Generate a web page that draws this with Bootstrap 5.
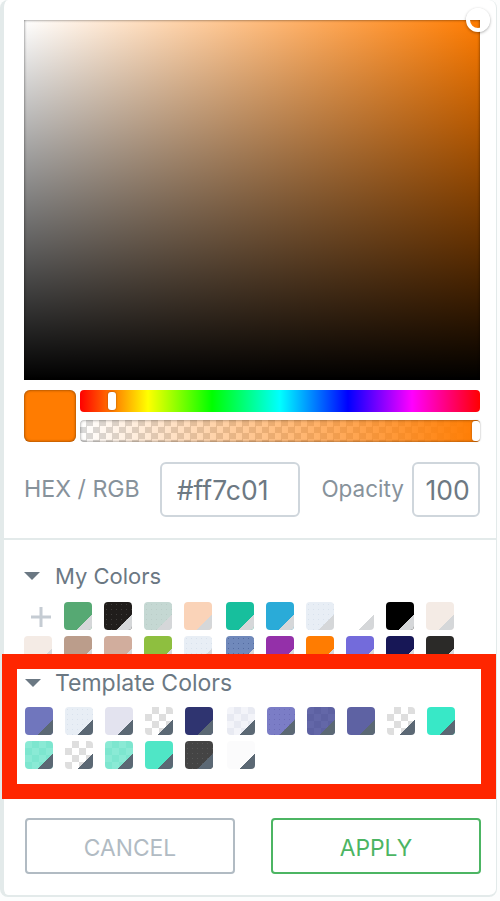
<!DOCTYPE html>
<html lang="en">
<head>
<meta charset="utf-8">
<title>Color picker</title>
<link rel="stylesheet" href="https://cdn.jsdelivr.net/npm/bootstrap@5.3.0/dist/css/bootstrap.min.css">
<style>
html,body{margin:0;background:#fcfdfd;height:100%}
body{font-family:Inter,"Noto Sans",sans-serif}
.cp-panel{width:497px;height:897px;background:#fff;border:solid #e3eaea;border-width:0 1px 2px 4px;border-radius:8px;padding-top:20px}
.cp-inner{padding:0 16px 0 20px}
.cp-field{height:360px;position:relative;background:linear-gradient(to top,#000,transparent),linear-gradient(to right,#fff,#ff7c01);box-shadow:inset 0 0 3px rgba(0,0,0,.6)}
.cp-handle{position:absolute;top:-12px;right:-10px;width:24px;height:24px;border:4px solid #fff;border-radius:50%;box-shadow:0 1px 3px rgba(0,0,0,.35)}
.cp-preview{width:52px;height:52px;flex:none;border-radius:6px;background:#ff7c01;box-shadow:inset 0 0 3px rgba(0,0,0,.55)}
.cp-sliders{margin-top:10px;gap:4px}
.cp-bars{gap:8px;flex:1}
.cp-bar{height:22px;border-radius:4px;position:relative}
.cp-hue{background:linear-gradient(to right,#f00,#ff0 17%,#0f0 33%,#0ff 50%,#00f 67%,#f0f 83%,#f00)}
.cp-alpha{background:linear-gradient(to right,rgba(255,124,1,0),#ff7c01),repeating-conic-gradient(#d9d9d9 0 25%,#fff 0 50%) 0 0/13px 13px;box-shadow:inset 0 0 3px rgba(0,0,0,.5)}
.cp-thumb{position:absolute;width:8px;background:#fff;border-radius:3px;box-shadow:0 0 2px rgba(0,0,0,.4)}
.cp-hue .cp-thumb{left:28px;top:2px;height:18px}
.cp-alpha .cp-thumb{right:0;top:1px;height:20px}
.cp-inputs{margin-top:20px;height:55px}
.cp-label{font-size:22.5px;color:#87929b;line-height:1}
.cp-hexlabel{font-size:23.2px}
.cp-text.form-control{height:55px;border:2px solid #cfd6dc;border-radius:6px;background:#fff;color:#6d7983;font-size:26.5px;padding:0;box-shadow:none}
.cp-hex.form-control{width:140px;margin-left:20px;text-align:left;padding-left:15px}
.cp-op.form-control{width:68px;margin-left:8px;text-align:center;padding-left:3px}
.cp-oplabel{margin-left:auto}
.cp-section{height:116px;margin-top:21px;border-top:2px solid #e3eaea;padding:23px 16px 0 20px}
.cp-head{height:26px;font-size:22px;line-height:26px;color:#6b7883}
.cp-tpl .cp-head{font-size:23px}
.cp-caret{width:16px;height:8px;flex:none;margin-right:15px;background:#6b7883;clip-path:polygon(0 0,100% 0,50% 100%)}
.cp-tpl .cp-caret{margin-right:14px}
.cp-grid{display:grid;grid-template-columns:repeat(4,40px) 42px repeat(6,40px);row-gap:6px;margin-top:13px}
.cp-plus{width:20px;height:20px;margin:5px 0 0 7px;display:block}
.cp-sw{display:block;width:28px;height:28px;border-radius:4px;position:relative;overflow:hidden}
.cp-sw::after{content:"";position:absolute;inset:0;background:linear-gradient(135deg,transparent 73%,#d5d7d9 73%)}
.cp-tpl .cp-sw::after{background:linear-gradient(135deg,transparent 73%,#5b6874 73%)}
.cp-redbox{width:494px;margin-left:-2px;height:145px;border:15px solid #ff2600;padding:1px 0 0 8px;background:#fff}
.cp-redbox .cp-grid{margin-top:11px}
.cp-actions{margin-top:19px;padding:0 15px 0 21px;gap:36px}
.cp-btn.btn{flex:1;height:56px;border-width:2px;border-radius:4px;font-size:22.8px;line-height:1;background:#fff;padding:5px 0 0}
.cp-cancel.btn{border-color:#b1bbc3;color:#b1bbc3}
.cp-apply.btn{border-color:#4cb563;color:#4cb563}
.dots{background-image:radial-gradient(var(--dot) .6px,transparent .9px);background-size:5px 5px}
.chk{background-image:repeating-conic-gradient(var(--chk) 0 25%,transparent 0 50%);background-size:14px 14px}
.k1{background-color:#56a973}.k2{background-color:#201d1b;--dot:rgba(255,255,255,.14)}.k3{background-color:#c5d8d3;--dot:rgba(0,0,0,.05)}.k4{background-color:#fad3b8}.k5{background-color:#17bf9d}.k6{background-color:#2aabd8}.k7{background-color:#e8eef5;--dot:rgba(90,120,170,.1)}.k8{background-color:#fff}.k9{background-color:#000}.k10{background-color:#f4ebe5}
.k11{background-color:#bb9d8b}.k12{background-color:#d1ad9d}.k13{background-color:#8ebf3f}.k14{background-color:#7089bb;--dot:rgba(20,40,100,.3)}.k15{background-color:#9430a9}.k16{background-color:#ff7c01}.k17{background-color:#736bdb}.k18{background-color:#171756}.k19{background-color:#2b2a28}
.t1{background-color:#7076bd}.t2{background-color:#e3e3ef}.t3{background-color:#fff;--chk:#dedede}.t4{background-color:#2f3470}.t5{background-color:#f3f4f9;--chk:#e8eaf2}.t6{background-color:#7b7dc6;--dot:rgba(40,40,120,.18)}.t7{background-color:#6367a8;--chk:#5d61a2}.t8{background-color:#5e62a3}.t9{background-color:#38e8c7}.t10{background-color:#8aead5;--chk:#7de6cf}.t11{background-color:#4fe6c6}.t12{background-color:#444;--dot:rgba(255,255,255,.1)}.t13{background-color:#fbfbfc}
</style>
</head>
<body>
<div class="cp-panel">
  <div class="cp-inner">
    <div class="cp-field"><span class="cp-handle"></span></div>
    <div class="d-flex cp-sliders">
      <div class="cp-preview"></div>
      <div class="d-flex flex-column cp-bars">
        <div class="cp-bar cp-hue"><span class="cp-thumb"></span></div>
        <div class="cp-bar cp-alpha"><span class="cp-thumb"></span></div>
      </div>
    </div>
    <div class="d-flex align-items-center cp-inputs">
      <span class="cp-label cp-hexlabel">HEX / RGB</span>
      <input class="form-control cp-text cp-hex" type="text" value="#ff7c01" aria-label="Hex">
      <span class="cp-label cp-oplabel">Opacity</span>
      <input class="form-control cp-text cp-op" type="text" value="100" aria-label="Opacity">
    </div>
  </div>

  <div class="cp-section overflow-hidden">
    <div class="d-flex align-items-center cp-head"><span class="cp-caret"></span>My Colors</div>
    <div class="cp-grid">
      <svg class="cp-plus" viewBox="0 0 20 20"><path d="M10 0v20M0 10h20" stroke="#c5ccd3" stroke-width="3" fill="none"/></svg>
      <span class="cp-sw k1"></span><span class="cp-sw k2 dots"></span><span class="cp-sw k3 dots"></span><span class="cp-sw k4"></span><span class="cp-sw k5"></span><span class="cp-sw k6"></span><span class="cp-sw k7 dots"></span><span class="cp-sw k8"></span><span class="cp-sw k9"></span><span class="cp-sw k10"></span>
      <span class="cp-sw k10"></span><span class="cp-sw k11"></span><span class="cp-sw k12"></span><span class="cp-sw k13"></span><span class="cp-sw k7 dots"></span><span class="cp-sw k14 dots"></span><span class="cp-sw k15"></span><span class="cp-sw k16"></span><span class="cp-sw k17"></span><span class="cp-sw k18"></span><span class="cp-sw k19"></span>
    </div>
  </div>

  <div class="cp-redbox cp-tpl">
    <div class="d-flex align-items-center cp-head"><span class="cp-caret"></span>Template Colors</div>
    <div class="cp-grid">
      <span class="cp-sw t1"></span><span class="cp-sw k7 dots"></span><span class="cp-sw t2"></span><span class="cp-sw t3 chk"></span><span class="cp-sw t4"></span><span class="cp-sw t5 chk"></span><span class="cp-sw t6 dots"></span><span class="cp-sw t7 chk"></span><span class="cp-sw t8"></span><span class="cp-sw t3 chk"></span><span class="cp-sw t9"></span>
      <span class="cp-sw t10 chk"></span><span class="cp-sw t3 chk"></span><span class="cp-sw t10 chk"></span><span class="cp-sw t11"></span><span class="cp-sw t12 dots"></span><span class="cp-sw t13"></span>
    </div>
  </div>

  <div class="d-flex cp-actions">
    <button type="button" class="btn cp-btn cp-cancel">CANCEL</button>
    <button type="button" class="btn cp-btn cp-apply">APPLY</button>
  </div>
</div>
<script src="https://cdn.jsdelivr.net/npm/bootstrap@5.3.0/dist/js/bootstrap.bundle.min.js"></script>
</body>
</html>
